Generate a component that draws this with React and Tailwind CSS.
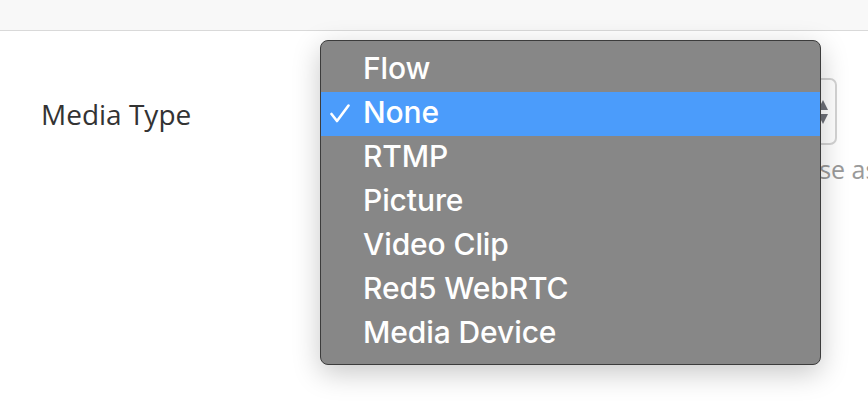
const OPTIONS = ['Flow', 'None', 'RTMP', 'Picture', 'Video Clip', 'Red5 WebRTC', 'Media Device']

function Check() {
  return (
    <svg width="20" height="19" viewBox="0 0 20 19" fill="none">
      <path d="M1.5 10 L7 17 L18.5 1.5" stroke="white" strokeWidth="2.6" strokeLinecap="round" strokeLinejoin="round" />
    </svg>
  )
}

export default function App() {
  return (
    <div className="w-[868px] h-[408px] bg-white overflow-hidden relative" style={{ fontFamily: '"Open Sans", sans-serif' }}>
      <div className="h-[31px] bg-[#f8f8f8] border-b border-[#d9d9d9]" />

      <div className="flex items-start pt-[47px]">
        <div className="w-[320px] pl-[41px] h-[67px] flex items-center pt-[4px] text-[28px] text-[#333]">Media Type</div>
        <div className="w-[517px] shrink-0">
          <div className="h-[67px] rounded-[7px] border-2 border-[#d4d4d4] flex items-center justify-end pr-[6px]">
            <svg width="12" height="30" viewBox="0 0 12 30">
              <path d="M6 3 L11 13 L1 13 Z" fill="#6e7078" />
              <path d="M1 17 L11 17 L6 27 Z" fill="#6e7078" />
            </svg>
          </div>
          <div className="mt-[6px] pl-[438px] text-[25px] text-[#9a9a9a] whitespace-nowrap">Choose as</div>
        </div>
      </div>

      <div
        className="absolute left-[320px] top-[40px] w-[501px] h-[325px] rounded-[8px] bg-[#878787] border border-[#3c3c3c] py-[7px] shadow-[0_8px_28px_rgba(0,0,0,0.22)]"
        style={{ fontFamily: 'Inter, "Noto Sans", sans-serif' }}
      >
        {OPTIONS.map(o => (
          <div
            key={o}
            className={`h-[44px] flex items-center text-[30px] font-medium text-white ${o === 'None' ? 'bg-[#4b9cfb]' : ''}`}
          >
            <div className="w-[42px] flex justify-start pl-[9px] pb-[2px]">{o === 'None' && <Check />}</div>
            <span className="leading-none pb-[5px] tracking-[-0.1px]">{o}</span>
          </div>
        ))}
      </div>
    </div>
  )
}
